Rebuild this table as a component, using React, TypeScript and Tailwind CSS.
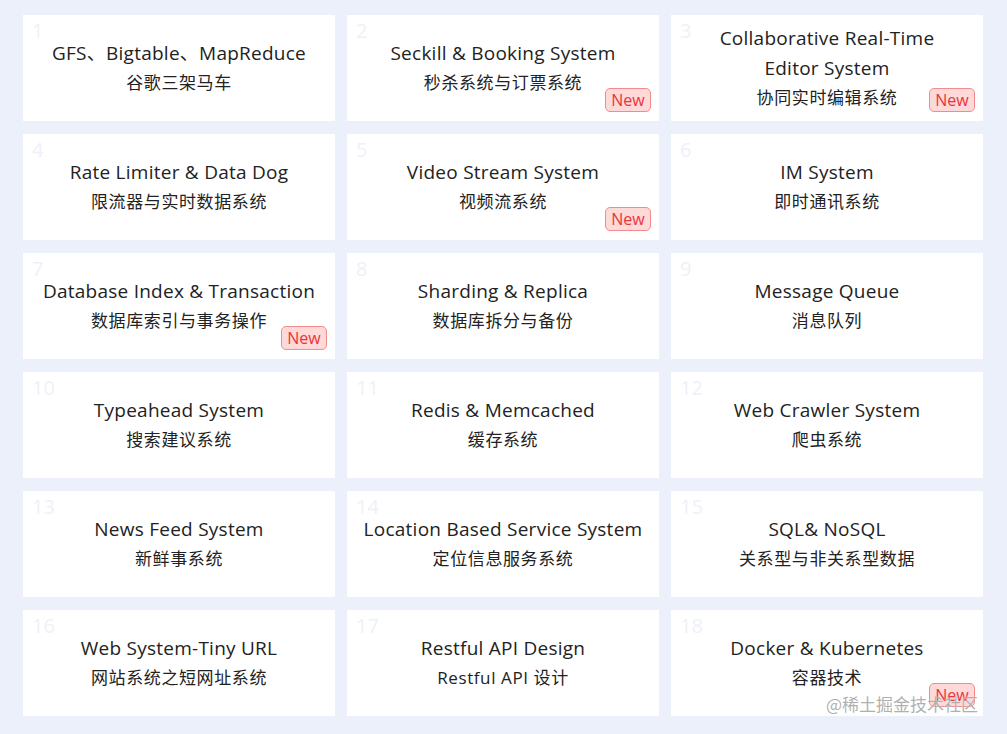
import React from 'react';

interface Topic {
  title: string[];
  sub: string;
  isNew?: boolean;
}

const TOPICS: Topic[] = [
  { title: ['GFS、Bigtable、MapReduce'], sub: '谷歌三架马车' },
  { title: ['Seckill & Booking System'], sub: '秒杀系统与订票系统', isNew: true },
  { title: ['Collaborative Real-Time', 'Editor System'], sub: '协同实时编辑系统', isNew: true },
  { title: ['Rate Limiter & Data Dog'], sub: '限流器与实时数据系统' },
  { title: ['Video Stream System'], sub: '视频流系统', isNew: true },
  { title: ['IM System'], sub: '即时通讯系统' },
  { title: ['Database Index & Transaction'], sub: '数据库索引与事务操作', isNew: true },
  { title: ['Sharding & Replica'], sub: '数据库拆分与备份' },
  { title: ['Message Queue'], sub: '消息队列' },
  { title: ['Typeahead System'], sub: '搜索建议系统' },
  { title: ['Redis & Memcached'], sub: '缓存系统' },
  { title: ['Web Crawler System'], sub: '爬虫系统' },
  { title: ['News Feed System'], sub: '新鲜事系统' },
  { title: ['Location Based Service System'], sub: '定位信息服务系统' },
  { title: ['SQL& NoSQL'], sub: '关系型与非关系型数据' },
  { title: ['Web System-Tiny URL'], sub: '网站系统之短网址系统' },
  { title: ['Restful API Design'], sub: 'Restful API 设计' },
  { title: ['Docker & Kubernetes'], sub: '容器技术', isNew: true },
];

const LATIN = "font-['Open_Sans','Noto_Sans_CJK_SC',sans-serif]";

function TopicCard({ topic, index }: { topic: Topic; index: number }) {
  return (
    <div className="relative h-[106px] bg-white flex flex-col items-center justify-center text-[#222]">
      <span className={`absolute top-[6px] left-[9px] text-[20px] leading-none text-[#eef1f8] ${LATIN}`}>
        {index + 1}
      </span>
      {topic.title.map((line) => (
        <div key={line} className={`text-[19px] leading-[30px] tracking-[0.25px] ${LATIN}`}>
          {line}
        </div>
      ))}
      <div className="text-[17px] leading-[30px] tracking-[0.6px] font-['Open_Sans','Noto_Sans_CJK_SC',sans-serif]">
        {topic.sub}
      </div>
      {topic.isNew && (
        <span className="absolute right-2 bottom-[9px] w-[46px] h-6 flex items-center justify-center rounded-[5px] border border-[#f28b8b] bg-[#ffd8d8] text-[#e8353b] text-[16px] font-['Open_Sans',sans-serif]">
          New
        </span>
      )}
    </div>
  );
}

export default function App() {
  return (
    <div className="relative w-[1007px] h-[734px] bg-[#ebf0fa] overflow-hidden">
      <div className="grid grid-cols-3 gap-x-3 gap-y-[13px] pl-[23px] pr-6 pt-[15px]">
        {TOPICS.map((t, i) => (
          <TopicCard key={i} topic={t} index={i} />
        ))}
      </div>
      <span className="absolute left-[826px] top-[691px] text-[17px] text-[#9a9a9a]/80 font-['Noto_Sans_CJK_SC',sans-serif] [text-shadow:0_0_1px_#fff]">
        @稀土掘金技术社区
      </span>
    </div>
  );
}
